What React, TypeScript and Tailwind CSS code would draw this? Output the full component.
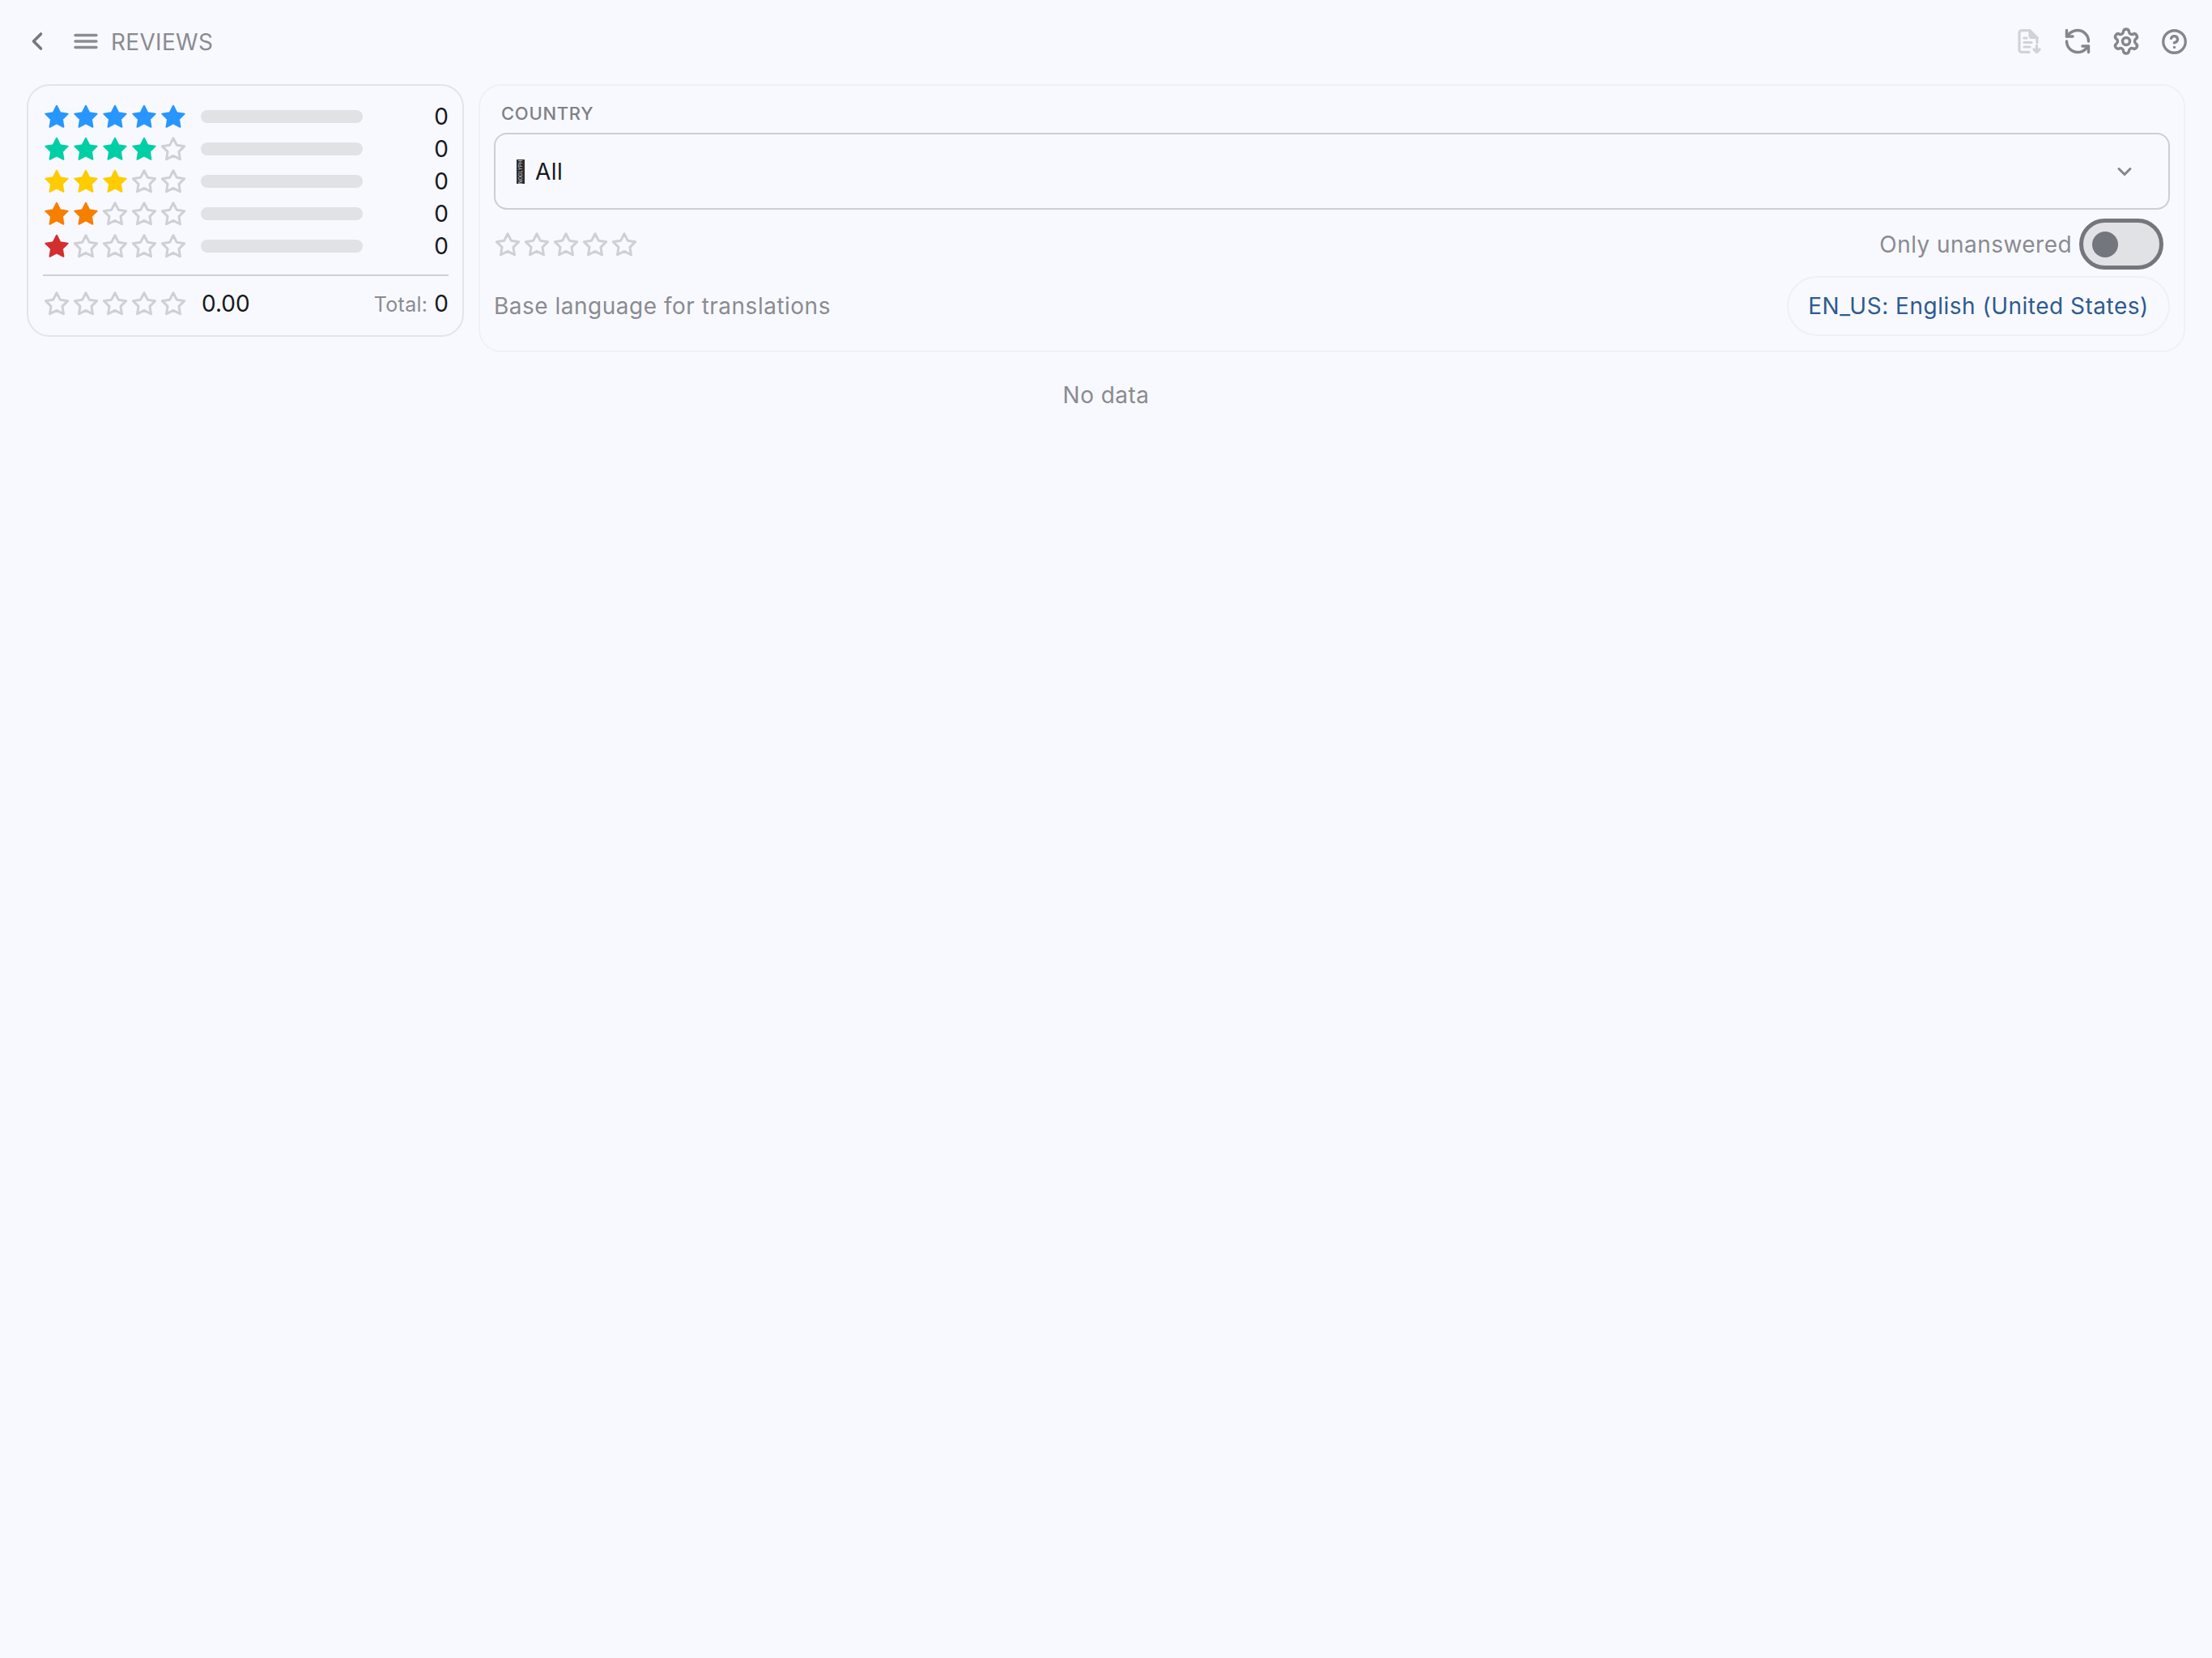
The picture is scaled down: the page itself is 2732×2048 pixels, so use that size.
import { ChevronDown, ChevronLeft, CircleHelp, RefreshCcw, Settings } from "lucide-react";

const starPoints = (() => {
  const pts: string[] = [];
  for (let i = 0; i < 10; i++) {
    const r = i % 2 === 0 ? 14.4 : 7.3;
    const a = ((-90 + 36 * i) * Math.PI) / 180;
    pts.push(`${(15 + r * Math.cos(a)).toFixed(2)},${(16.1 + r * Math.sin(a)).toFixed(2)}`);
  }
  return pts.join(" ");
})();

function Star({ color }: { color?: string }) {
  return (
    <svg width="30" height="30" viewBox="0 0 30 30" className="shrink-0">
      <polygon
        points={starPoints}
        fill={color ?? "none"}
        stroke={color ?? "#cfd0d5"}
        strokeWidth={color ? 2 : 3}
        strokeLinejoin="round"
      />
    </svg>
  );
}

function Stars({ count = 0, color }: { count?: number; color?: string }) {
  return (
    <div className="flex gap-[6px]">
      {[0, 1, 2, 3, 4].map((i) => (
        <Star key={i} color={i < count ? color : undefined} />
      ))}
    </div>
  );
}

const rows = [
  { count: 5, color: "#2896ff" },
  { count: 4, color: "#00cfa6" },
  { count: 3, color: "#ffcc00" },
  { count: 2, color: "#f77f00" },
  { count: 1, color: "#d32f2f" },
];

function DocIcon() {
  return (
    <svg width="30" height="30" viewBox="0 0 30 30" fill="none" stroke="#d1d2d7" strokeWidth="3.2" strokeLinecap="round" strokeLinejoin="round">
      <path d="M15 28.4H6a3 3 0 0 1-3-3V4.6a3 3 0 0 1 3-3h10l9 9v6" />
      <path d="M16 2v6a2.5 2.5 0 0 0 2.5 2.5H25" fill="#d1d2d7" />
      <path d="M9 11h3M9 16.5h9M9 22h7" />
      <path d="M24.5 20v8M21 25l3.5 3.5 3.5-3.5" />
    </svg>
  );
}

function MenuIcon() {
  return (
    <svg width="30" height="20" viewBox="0 0 30 20" fill="none" stroke="#8b8c92" strokeWidth="3.4" strokeLinecap="round">
      <path d="M2 2.5h26M2 10h26M2 17.5h26" />
    </svg>
  );
}

export default function App() {
  return (
    <div className="min-h-[2048px] w-full bg-[#f8f9ff] font-['Inter',sans-serif] text-[28px] text-[#8a8b91]">
      <header className="flex h-[104px] items-center justify-between pb-[2px] pl-[28px] pr-[31px]">
        <div className="flex items-center">
          <ChevronLeft size={36} strokeWidth={2.4} color="#77787e" />
          <div className="ml-[27px]">
            <MenuIcon />
          </div>
          <span className="ml-[16px] translate-y-[1px] leading-none tracking-[0.3px]">REVIEWS</span>
        </div>
        <div className="flex items-center gap-[29px]">
          <div className="mr-[1px]">
            <DocIcon />
          </div>
          <RefreshCcw size={36} strokeWidth={2.3} color="#85868c" className="-ml-[3px] -mr-[2px]" />
          <Settings size={36} strokeWidth={2.3} color="#85868c" className="-mx-[3px]" />
          <CircleHelp size={33} strokeWidth={2.4} color="#85868c" className="-mx-[1px]" />
        </div>
      </header>

      <div className="flex items-start gap-[18px] pl-[33px] pr-[33px]">
        <section className="h-[312px] w-[540px] shrink-0 rounded-[28px] border-2 border-[#e3e4e8] pl-[18px] pr-[17px] pt-[18px]">
          <div className="flex flex-col">
            {rows.map((r) => (
              <div key={r.count} className="flex h-[40px] items-center pl-[2px]">
                <Stars count={r.count} color={r.color} />
                <div className="ml-[19px] h-[16px] w-[200px] rounded-full bg-[#e1e2e6]" />
                <span className="ml-auto text-[#17181c] leading-none">0</span>
              </div>
            ))}
          </div>
          <div className="mt-[15px] flex h-[70px] items-center border-t-2 border-[#cfd0d5] pl-[2px]">
            <Stars />
            <span className="ml-[20px] text-[#17181c] leading-none">0.00</span>
            <span className="ml-auto translate-y-[1px] text-[25px] leading-none tracking-[0.3px]">Total:</span>
            <span className="ml-[8px] text-[#17181c] leading-none">0</span>
          </div>
        </section>

        <section className="h-[331px] flex-1 rounded-[28px] border-2 border-[#f0f1f4] px-[17px] pt-[20px]">
          <div className="pl-[9px] text-[22px] font-medium leading-[28px] tracking-[0.7px] text-[#7f8086]">COUNTRY</div>
          <div className="mt-[10px] flex h-[95px] items-center rounded-[16px] border-2 border-[#cdced3] pl-[26px] pr-[40px] text-[#17181c]">
            <span className="flex h-[30px] w-[10px] items-center justify-center overflow-hidden bg-[#2c2d33] text-[6px] leading-none text-[#d8d9dd] [writing-mode:vertical-rl] rotate-180">
              NOGLYPH
            </span>
            <span className="ml-[13px] leading-none tracking-[0.4px]">All</span>
            <ChevronDown size={28} strokeWidth={2.6} color="#85868c" className="ml-auto" />
          </div>
          <div className="mt-[11px] flex h-[63px] items-center justify-between pl-[2px] pr-[8px]">
            <Stars />
            <div className="flex items-center">
              <span className="leading-none tracking-[0.45px]">Only unanswered</span>
              <div className="ml-[9px] flex h-[63px] w-[104px] items-center rounded-full border-[5px] border-[#73767d] bg-[#e1e2e6] pl-[11px]">
                <div className="h-[32px] w-[32px] rounded-full bg-[#73767d]" />
              </div>
            </div>
          </div>
          <div className="mt-[8px] flex items-center justify-between">
            <span className="leading-none tracking-[0.5px]">Base language for translations</span>
            <div className="flex h-[74px] w-[473px] items-center justify-center rounded-full border-2 border-[#eff0f3] leading-none tracking-[0.5px] text-[#2f5a8f]">
              EN_US: English (United States)
            </div>
          </div>
        </section>
      </div>

      <div className="mt-[33px] text-center leading-[40px] tracking-[0.45px]">No data</div>
    </div>
  );
}
